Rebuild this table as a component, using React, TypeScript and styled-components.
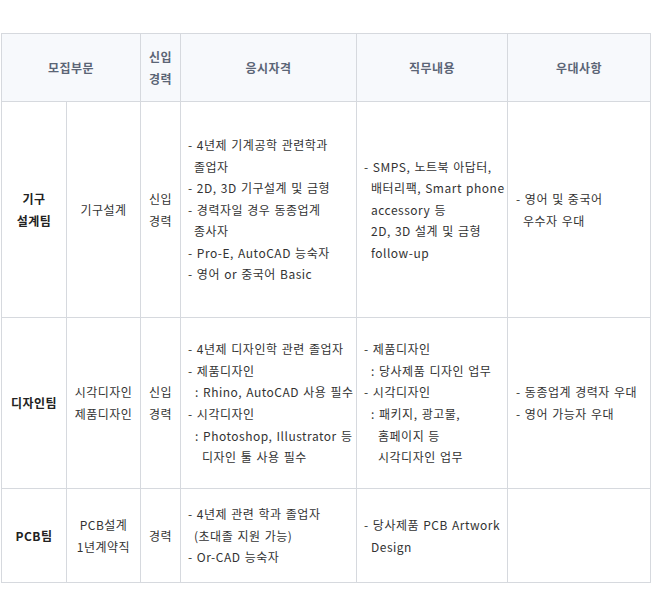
import React from "react";
import styled, { createGlobalStyle } from "styled-components";

const Global = createGlobalStyle`
  html, body { margin: 0; padding: 0; background: #fff; }
  body { font-family: "Noto Sans CJK KR", "Noto Sans", sans-serif; }
`;

const Page = styled.div`
  padding: 33px 0 0 1px;
`;

const Table = styled.table`
  border-collapse: collapse;
  table-layout: fixed;
  width: 649px;
  font-size: 12px;
  color: #333;
`;

const HeadCell = styled.th`
  background: #f7f9fc;
  border: 1px solid #d6d9de;
  color: #5b6576;
  font-weight: 700;
  font-size: 12px;
  letter-spacing: 0.5px;
  line-height: 21.6px;
  text-align: center;
  vertical-align: middle;
  padding: 0;
`;

const Cell = styled.td<{ $align?: "left" | "center"; $bold?: boolean; $pad?: number }>`
  border: 1px solid #d6d9de;
  text-align: ${(p) => p.$align ?? "center"};
  font-weight: ${(p) => (p.$bold ? 700 : 400)};
  color: ${(p) => (p.$bold ? "#222" : "#333")};
  line-height: 21.6px;
  letter-spacing: 0.5px;
  word-spacing: 1px;
  vertical-align: middle;
  padding: 0 0 0 ${(p) => p.$pad ?? 0}px;
  white-space: nowrap;
  overflow: visible;
`;

const Row = styled.tr<{ $h: number }>`
  height: ${(p) => p.$h}px;
`;

const Line = styled.div<{ $indent?: number }>`
  padding-left: ${(p) => p.$indent ?? 0}px;
`;

type L = [string, number?];

const Lines = ({ items }: { items: L[] }) => (
  <>
    {items.map(([t, i], k) => (
      <Line key={k} $indent={i}>
        {t}
      </Line>
    ))}
  </>
);

export default function App() {
  return (
    <>
      <Global />
      <Page>
        <Table>
          <colgroup>
            <col style={{ width: 65 }} />
            <col style={{ width: 74 }} />
            <col style={{ width: 40 }} />
            <col style={{ width: 176 }} />
            <col style={{ width: 151 }} />
            <col style={{ width: 143 }} />
          </colgroup>
          <thead>
            <Row $h={68}>
              <HeadCell colSpan={2}>모집부문</HeadCell>
              <HeadCell>
                신입
                <br />
                경력
              </HeadCell>
              <HeadCell>응시자격</HeadCell>
              <HeadCell>직무내용</HeadCell>
              <HeadCell>우대사항</HeadCell>
            </Row>
          </thead>
          <tbody>
            <Row $h={216}>
              <Cell $bold>
                기구
                <br />
                설계팀
              </Cell>
              <Cell>기구설계</Cell>
              <Cell>
                신입
                <br />
                경력
              </Cell>
              <Cell $align="left" $pad={7}>
                <Lines
                  items={[
                    ["- 4년제 기계공학 관련학과"],
                    ["졸업자", 6],
                    ["- 2D, 3D 기구설계 및 금형"],
                    ["- 경력자일 경우 동종업계"],
                    ["종사자", 6],
                    ["- Pro-E, AutoCAD 능숙자"],
                    ["- 영어 or 중국어 Basic"],
                  ]}
                />
              </Cell>
              <Cell $align="left" $pad={7}>
                <Lines
                  items={[
                    ["- SMPS, 노트북 아답터,"],
                    ["배터리팩, Smart phone", 7],
                    ["accessory 등", 7],
                    ["2D, 3D 설계 및 금형", 7],
                    ["follow-up", 7],
                  ]}
                />
              </Cell>
              <Cell $align="left" $pad={8}>
                <Lines items={[["- 영어 및 중국어"], ["우수자 우대", 7]]} />
              </Cell>
            </Row>
            <Row $h={171}>
              <Cell $bold>디자인팀</Cell>
              <Cell>
                시각디자인
                <br />
                제품디자인
              </Cell>
              <Cell>
                신입
                <br />
                경력
              </Cell>
              <Cell $align="left" $pad={7}>
                <Lines
                  items={[
                    ["- 4년제 디자인학 관련 졸업자"],
                    ["- 제품디자인"],
                    [": Rhino, AutoCAD 사용 필수", 7],
                    ["- 시각디자인"],
                    [": Photoshop, Illustrator 등", 7],
                    ["디자인 툴 사용 필수", 14],
                  ]}
                />
              </Cell>
              <Cell $align="left" $pad={7}>
                <Lines
                  items={[
                    ["- 제품디자인"],
                    [": 당사제품 디자인 업무", 7],
                    ["- 시각디자인"],
                    [": 패키지, 광고물,", 7],
                    ["홈페이지 등", 14],
                    ["시각디자인 업무", 14],
                  ]}
                />
              </Cell>
              <Cell $align="left" $pad={8}>
                <Lines items={[["- 동종업계 경력자 우대"], ["- 영어 가능자 우대"]]} />
              </Cell>
            </Row>
            <Row $h={94}>
              <Cell $bold>PCB팀</Cell>
              <Cell>
                PCB설계
                <br />
                1년계약직
              </Cell>
              <Cell>경력</Cell>
              <Cell $align="left" $pad={7}>
                <Lines
                  items={[
                    ["- 4년제 관련 학과 졸업자"],
                    ["(초대졸 지원 가능)", 6],
                    ["- Or-CAD 능숙자"],
                  ]}
                />
              </Cell>
              <Cell $align="left" $pad={7}>
                <Lines items={[["- 당사제품 PCB Artwork"], ["Design", 7]]} />
              </Cell>
              <Cell />
            </Row>
          </tbody>
        </Table>
      </Page>
    </>
  );
}
